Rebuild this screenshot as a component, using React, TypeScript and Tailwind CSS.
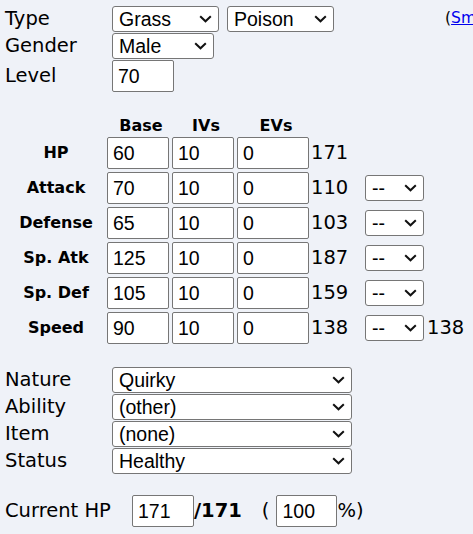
import React from 'react'

const selectBase =
  "block appearance-none rounded-[3px] border border-[#767676] bg-white py-0 pl-[6px] font-['Liberation_Sans',Arial,sans-serif] text-[19.5px] leading-[22px] text-black"
const inputBase =
  "h-[32px] shrink-0 rounded-[2px] border border-[#767676] bg-white px-[5px] font-['Liberation_Sans',Arial,sans-serif] text-[19.5px] text-black"

const stats = [
  { name: 'HP', base: '60', total: '171', boost: false },
  { name: 'Attack', base: '70', total: '110', boost: true },
  { name: 'Defense', base: '65', total: '103', boost: true },
  { name: 'Sp. Atk', base: '125', total: '187', boost: true },
  { name: 'Sp. Def', base: '105', total: '159', boost: true },
  { name: 'Speed', base: '90', total: '138', boost: true, extra: '138' },
]

const details = [
  { label: 'Nature', value: 'Quirky' },
  { label: 'Ability', value: '(other)' },
  { label: 'Item', value: '(none)' },
  { label: 'Status', value: 'Healthy' },
]

function Pick({ value, className, wrap = '' }: { value: string; className: string; wrap?: string }) {
  return (
    <span className={`relative flex shrink-0 ${wrap}`}>
      <select defaultValue={value} className={`${selectBase} ${className}`}>
        <option>{value}</option>
      </select>
      <svg
        width="13"
        height="8"
        viewBox="0 0 13 8"
        className="pointer-events-none absolute top-1/2 right-[7px] -translate-y-1/2"
      >
        <polyline points="1.2 1.2 6.5 6.3 11.8 1.2" fill="none" stroke="#111" strokeWidth="2" />
      </svg>
    </span>
  )
}

export default function App() {
  return (
    <div className="min-h-screen w-[473px] overflow-hidden bg-[#eff2f8] font-['DejaVu_Sans',Verdana,sans-serif] text-[19.5px] text-black">
      <div className="flex flex-col pl-[5px] pt-[6px]">
        <div className="flex flex-col gap-[1px]">
          <div className="flex h-[26px] items-center whitespace-nowrap">
            <span className="w-[107px] shrink-0">Type</span>
            <Pick value="Grass" className="h-[26px] w-[107px]" />
            <Pick value="Poison" className="h-[26px] w-[107px]" wrap="ml-[8px]" />
            <span className="ml-[111px] shrink-0 text-[15.5px]">
              (<a href="#" className="text-[#0000ee] underline">Smogon analysis</a>)
            </span>
          </div>
          <div className="flex h-[26px] items-center">
            <span className="w-[107px] shrink-0">Gender</span>
            <Pick value="Male" className="h-[26px] w-[102px]" />
          </div>
          <div className="flex items-center">
            <span className="w-[107px] shrink-0">Level</span>
            <input defaultValue="70" className={`${inputBase} w-[62px]`} />
          </div>
        </div>

        <div className="mt-[24px] flex h-[20px] items-center gap-[3px] text-[16px] font-bold">
          <span className="w-[102px]" />
          <span className="w-[62px] text-center">Base</span>
          <span className="w-[62px] text-center">IVs</span>
          <span className="w-[72px] text-center">EVs</span>
        </div>

        <div className="mt-[1px] flex flex-col gap-[3px]">
          {stats.map((s) => (
            <div key={s.name} className="flex items-center">
              <span className="w-[102px] shrink-0 text-center text-[16px] font-bold">{s.name}</span>
              <input defaultValue={s.base} className={`${inputBase} w-[62px]`} />
              <input defaultValue="10" className={`${inputBase} ml-[3px] w-[62px]`} />
              <input defaultValue="0" className={`${inputBase} ml-[3px] w-[72px]`} />
              <span className="w-[56px] shrink-0 pl-[2px]">{s.total}</span>
              {s.boost && <Pick value="--" className="h-[26px] w-[59px]" />}
              {s.extra && <span className="ml-[3px]">{s.extra}</span>}
            </div>
          ))}
        </div>

        <div className="mt-[23px] flex flex-col gap-[1px]">
          {details.map((d) => (
            <div key={d.label} className="flex h-[26px] items-center">
              <span className="w-[107px] shrink-0">{d.label}</span>
              <Pick value={d.value} className="h-[26px] w-[240px]" />
            </div>
          ))}
        </div>

        <div className="mt-[21px] flex items-center whitespace-nowrap">
          <span className="w-[127px] shrink-0">Current HP</span>
          <input defaultValue="171" className={`${inputBase} w-[62px]`} />
          <span className="font-bold">/171</span>
          <span className="ml-[20px]">(</span>
          <input defaultValue="100" className={`${inputBase} ml-[7px] w-[61px]`} />
          <span>%)</span>
        </div>
      </div>
    </div>
  )
}
